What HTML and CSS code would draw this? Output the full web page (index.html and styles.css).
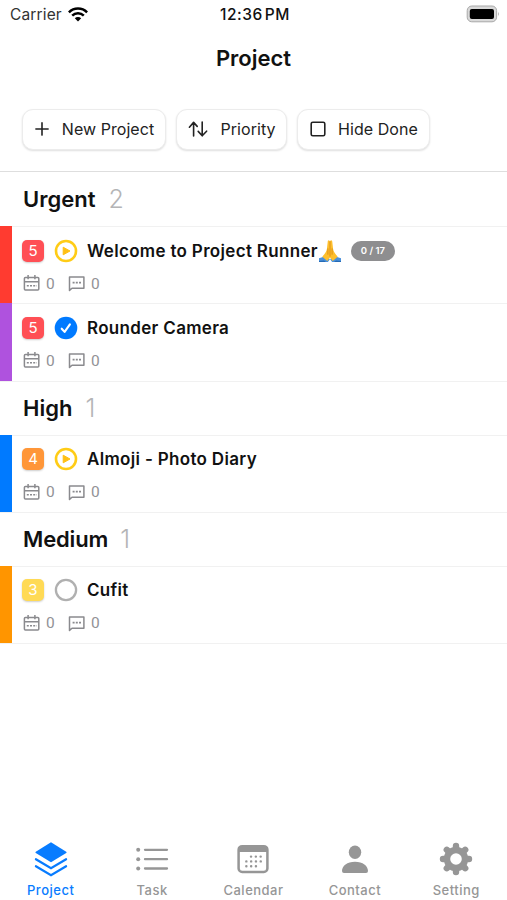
FILE: index.html
```html
<!DOCTYPE html>
<html lang="en">
<head>
<meta charset="utf-8">
<meta name="viewport" content="width=device-width, initial-scale=1">
<title>Project</title>
<link rel="stylesheet" href="styles.css">
</head>
<body>
<svg class="defs" width="0" height="0" aria-hidden="true">
  <symbol id="i-cal" viewBox="0 0 18 18">
    <g fill="none" stroke="#8a8a8e" stroke-width="1.5">
      <rect x="1.4" y="3.4" width="14.4" height="12.6" rx="1"/>
      <path d="M1.4 7.8h14.4M5.1 1v4.2M11.9 1v4.2"/>
      <path d="M3.8 11.8h10" stroke-dasharray="2 1.2" stroke-width="1.4"/>
    </g>
  </symbol>
  <symbol id="i-msg" viewBox="0 0 18 18">
    <g fill="none" stroke="#8a8a8e" stroke-width="1.5">
      <path d="M1.5 16.4V3h14.4v11.3H4z" stroke-linejoin="round"/>
      <path d="M4.6 8.6h8.4" stroke-dasharray="2 1.2" stroke-width="1.7"/>
    </g>
  </symbol>
  <symbol id="i-play" viewBox="0 0 24 24">
    <circle cx="12" cy="12" r="10" fill="#fff" stroke="#ffcc16" stroke-width="2.6"/>
    <path d="M9.2 8.2v7.6l6.8-3.8z" fill="#ffc012" stroke="#ffc012" stroke-width="1" stroke-linejoin="round"/>
  </symbol>
  <symbol id="i-check" viewBox="0 0 24 24">
    <circle cx="12" cy="12" r="11.3" fill="#007aff"/>
    <path d="M7.7 12.7l2.9 3.2 5.3-7.6" fill="none" stroke="#fff" stroke-width="2.1" stroke-linecap="round" stroke-linejoin="round"/>
  </symbol>
  <symbol id="i-open" viewBox="0 0 24 24">
    <circle cx="12" cy="12" r="10.1" fill="#fff" stroke="#b0b0b0" stroke-width="2.3"/>
  </symbol>
</svg>

<div class="screen">
  <header class="status">
    <div class="carrier"><span>Carrier</span>
      <svg width="20" height="15" viewBox="0 0 20 15"><g fill="none" stroke="#000" stroke-width="2.5"><path d="M.9 5.3a13 13 0 0 1 18.2 0"/><path d="M4.2 8.7a8.3 8.3 0 0 1 11.6 0"/></g><path d="M10 14.6l-3.2-3.3a4.6 4.6 0 0 1 6.4 0z"/></svg>
    </div>
    <span class="time">12:36 PM</span>
    <svg class="battery" width="34" height="18" viewBox="0 0 34 18"><rect x="1.2" y="1" width="29.4" height="15.8" rx="4.6" fill="#d9d9d9" stroke="#a9a9a9" stroke-width="1"/><rect x="3.8" y="4" width="24.2" height="10" rx="2"/><path d="M32 6.8q1.7 2.2 0 4.4z" fill="#a9a9a9"/></svg>
  </header>
  <h1 class="title">Project</h1>
  <div class="toolbar">
    <button class="btn new"><svg width="16" height="16" viewBox="0 0 16 16"><path d="M8 1.9v12.2M1.9 8h12.2"/></svg><span>New Project</span></button>
    <button class="btn sort"><svg width="20" height="16" viewBox="0 0 20 16"><path d="M5.6 15V1.6M1.4 6.2l4.2-4.8 3.6 4M14.2 1v13.4M10.2 10.4l4 4.4 4.4-4.6"/></svg><span>Priority</span></button>
    <button class="btn hide"><svg width="16" height="16" viewBox="0 0 16 16"><rect x="1.2" y="1.2" width="13.6" height="13.6" rx="1.6"/></svg><span>Hide Done</span></button>
  </div>

  <main class="list">
    <h2 class="group">Urgent<span>2</span></h2>
    <article class="row red">
      <div class="line"><b class="badge p5">5</b><svg class="state"><use href="#i-play"/></svg><span class="name">Welcome to Project Runner</span>
        <svg class="pray" width="24" height="24" viewBox="0 0 24 24" role="img" aria-label="🙏"><path d="M1 19.2l7.2-2.3 3.7 3.3-2 2.7H1zM23 19.2l-7.2-2.3-3.7 3.3 2 2.7H23z" fill="#4a91dc"/><path d="M1 22l5-.4 2 1.3H1zM23 22l-5-.4-2 1.3h7z" fill="#256ab5"/><path d="M11.9 2.4c-.9-1.9-2.2-1.2-2.2.7L8.9 10c-.3 2.6-2.4 5.2-4.6 7.7l5 4.3 2.7-3.5 2.7 3.5 5-4.3c-2.2-2.5-4.3-5.1-4.6-7.7l-.8-6.9c0-1.9-1.4-2.6-2.4-.7z" fill="#fdbf2d"/><path d="M12 2.6v14.6M9.9 9.8v5.5M14.1 9.8v5.5" fill="none" stroke="#d98a16" stroke-width=".9" stroke-linecap="round"/></svg>
        <span class="pill">0 / 17</span></div>
      <div class="meta"><svg><use href="#i-cal"/></svg><span>0</span><svg><use href="#i-msg"/></svg><span>0</span></div>
    </article>
    <article class="row purple">
      <div class="line"><b class="badge p5">5</b><svg class="state"><use href="#i-check"/></svg><span class="name">Rounder Camera</span></div>
      <div class="meta"><svg><use href="#i-cal"/></svg><span>0</span><svg><use href="#i-msg"/></svg><span>0</span></div>
    </article>
    <h2 class="group">High<span>1</span></h2>
    <article class="row blue">
      <div class="line"><b class="badge p4">4</b><svg class="state"><use href="#i-play"/></svg><span class="name">Almoji - Photo Diary</span></div>
      <div class="meta"><svg><use href="#i-cal"/></svg><span>0</span><svg><use href="#i-msg"/></svg><span>0</span></div>
    </article>
    <h2 class="group medium">Medium<span>1</span></h2>
    <article class="row orange">
      <div class="line"><b class="badge p3">3</b><svg class="state"><use href="#i-open"/></svg><span class="name">Cufit</span></div>
      <div class="meta"><svg><use href="#i-cal"/></svg><span>0</span><svg><use href="#i-msg"/></svg><span>0</span></div>
    </article>
  </main>

  <nav class="tabs">
    <a class="tab active"><svg viewBox="0 0 36 36"><path d="M18 1.2L33.2 10.8a.8.8 0 0 1 0 1.3L18 21.2 2.8 12.1a.8.8 0 0 1 0-1.3z"/><path d="M2.9 18.2L18 27.2l15.1-9M2.9 25.2L18 34.2l15.1-9" fill="none" stroke="currentColor" stroke-width="2.2" stroke-linecap="round"/></svg><span>Project</span></a>
    <a class="tab"><svg viewBox="0 0 36 36"><g fill="none" stroke="currentColor" stroke-width="2.3" stroke-linecap="round"><path d="M11 8.8h22M11 18.2h22M11 27.5h22"/></g><circle cx="4.2" cy="8.8" r="2"/><circle cx="4.2" cy="18.2" r="2"/><circle cx="4.2" cy="27.5" r="2"/></svg><span>Task</span></a>
    <a class="tab"><svg viewBox="0 0 36 36"><rect x="3.6" y="5.2" width="28.8" height="25.8" rx="3.6" fill="none" stroke="currentColor" stroke-width="2.5"/><path d="M3 6h30v5H3z"/><path d="M16 15.6h10M11.3 20.4h15M11.3 25.2h10" fill="none" stroke="currentColor" stroke-width="2.4" stroke-linecap="round" stroke-dasharray=".1 4.7"/></svg><span>Calendar</span></a>
    <a class="tab"><svg viewBox="0 0 36 36"><ellipse cx="18" cy="11.3" rx="6.2" ry="6.8"/><path d="M5 30.1c0-5.2 5.2-9.3 13-9.3s13 4.1 13 9.3q0 1.9-2 1.9H7q-2 0-2-1.9z"/></svg><span>Contact</span></a>
    <a class="tab"><svg viewBox="0 0 36 36"><g fill="none" stroke="currentColor" stroke-width="6.4" stroke-linecap="round"><path d="M18 5v3M18 28v3M5 18h3M28 18h3M8.8 8.8l2 2M25.2 25.2l2 2M27.2 8.8l-2 2M10.8 25.2l-2 2"/></g><circle cx="18" cy="18" r="9" fill="none" stroke="currentColor" stroke-width="6.4"/></svg><span>Setting</span></a>
  </nav>
</div>
</body>
</html>
```

FILE: styles.css
```css
* { box-sizing: border-box; }
body { margin: 0; background: #fff; color: #111; font-family: Inter, sans-serif; }
svg { display: block; flex: none; }
.defs { position: absolute; }
.screen { width: 507px; height: 900px; display: flex; flex-direction: column; overflow: hidden; }

.status { height: 30px; display: grid; grid-template-columns: 1fr auto 1fr; align-items: center; padding: 0 7px 0 10px; font-size: 15.5px; }
.carrier { display: flex; gap: 6px; align-items: center; height: 29px; align-self: start; color: #333; letter-spacing: .15px; }
.time { font-weight: 500; color: #111; letter-spacing: .5px; word-spacing: -2.5px; height: 29px; line-height: 29px; align-self: start; }
.battery { justify-self: end; margin-top: -3px; }

.title { margin: 0; height: 55px; line-height: 56px; text-align: center; font-size: 22px; font-weight: 600; letter-spacing: 0; }

.toolbar { height: 87px; display: flex; gap: 10px; padding: 24px 0 0 22px; border-bottom: 1.5px solid #dedede; }
.btn { height: 41px; padding: 0 0 1px; display: flex; align-items: center; justify-content: center; border: 1px solid #ececec; border-radius: 11px; background: #fff; box-shadow: 0 1px 2px rgba(0,0,0,.13); font: 400 16px Inter, sans-serif; letter-spacing: .05px; color: #222; white-space: nowrap; }
.btn svg { fill: none; stroke: #222; stroke-width: 1.6; stroke-linecap: round; stroke-linejoin: round; }
.new { width: 144px; gap: 12px; }
.sort { width: 111px; gap: 12px; padding-left: 1px; }
.hide { width: 133px; gap: 12px; padding-left: 1px; }

.group { margin: 0; height: 54px; padding: 0 23px; display: flex; align-items: center; gap: 13px; font-size: 22px; font-weight: 600; color: #111; }
.medium { letter-spacing: -.15px; gap: 12px; }
.group span { font-size: 25px; font-weight: 300; color: #b4b4b6; }
.row { height: 77.25px; border-left: 12px solid; padding: 12.5px 0 0 10px; box-shadow: inset 0 1px #f1f1f1, 0 1px #f1f1f1; }
.red { border-color: #ff3b30; }
.purple { border-color: #af52de; }
.blue { border-color: #007aff; }
.orange { border-color: #ff9500; }
.line { height: 24px; display: flex; align-items: center; }
.badge { width: 22px; height: 22px; line-height: 22px; border-radius: 5px; text-align: center; color: #fff; font-size: 15px; font-weight: 400; box-shadow: 0 1px 2px rgba(0,0,0,.2); }
.p5 { background: #ff4f55; }
.p4 { background: #ff9638; }
.p3 { background: #ffda55; }
.state { width: 24px; height: 24px; margin: 0 9.5px 0 9.5px; }
.name { font-size: 17px; font-weight: 600; letter-spacing: .32px; white-space: nowrap; }
.pill { width: 44px; height: 20px; margin-left: 9px; border-radius: 10px; background: #8e8e90; color: #fff; font-size: 9.5px; font-weight: 600; line-height: 20px; text-align: center; }
.meta { display: flex; align-items: center; height: 18px; margin-top: 12px; color: #929296; font: 15.5px Roboto, sans-serif; }
.meta svg { width: 18px; height: 18px; margin: -1px 5px 0 1px; }
.meta span { width: 20px; }
.meta span + svg { margin-left: 2px; }

.tabs { margin-top: auto; height: 61px; display: grid; grid-template-columns: repeat(5, 1fr); }
.tab { display: flex; flex-direction: column; align-items: center; color: #969696; font-size: 13px; font-weight: 500; line-height: 20px; letter-spacing: .5px; }
.tab svg { width: 36px; height: 36px; margin-top: 2px; margin-bottom: 3px; fill: currentColor; }
.active { color: #087cff; }
```
